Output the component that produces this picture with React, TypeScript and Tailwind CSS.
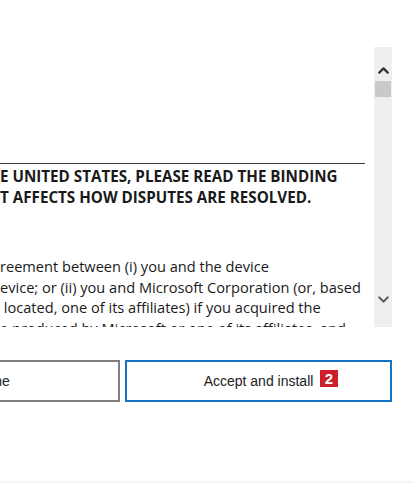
import { ChevronUp, ChevronDown } from "lucide-react";

const boldLines = [
  "E UNITED STATES, PLEASE READ THE BINDING",
  "T AFFECTS HOW DISPUTES ARE RESOLVED.",
];

const bodyLines = [
  "reement between (i) you and the device",
  "evice; or (ii) you and Microsoft Corporation (or, based",
  " located, one of its affiliates) if you acquired the",
  "e produced by Microsoft or one of its affiliates, and",
];

export default function App() {
  return (
    <div className="w-[412px] h-[487px] bg-white overflow-hidden flex flex-col">
      <div className="h-[47px]" />

      <div className="flex h-[280px] pr-[20px]">
        <div className="flex-1 overflow-hidden text-[#1a1a1a] font-['Open_Sans',sans-serif]">
          <div className="h-[116px]" />
          <div className="w-[365px] h-px bg-[#3a3a3a]" />
          <div className="mt-[2px] text-[15.2px] leading-[21px] font-bold">
            {boldLines.map((l) => (
              <div key={l} className="whitespace-pre">{l}</div>
            ))}
          </div>
          <div className="mt-[48px] text-[14.6px] leading-[20.5px]">
            {bodyLines.map((l) => (
              <div key={l} className="whitespace-pre">{l}</div>
            ))}
          </div>
        </div>

        <div className="w-[18px] bg-[#efefef] flex flex-col items-center">
          <ChevronUp className="mt-[15px] w-[17px] h-[17px] text-[#333]" strokeWidth={3.2} />
          <div className="mt-[2px] w-[16px] h-[16px] bg-[#c9c9c9]" />
          <div className="flex-1" />
          <ChevronDown className="mb-[19px] w-[17px] h-[17px] text-[#555]" strokeWidth={2.8} />
        </div>
      </div>

      <div className="mt-[33px] flex gap-[5px] h-[42px] font-['Liberation_Sans',Arial,sans-serif] text-[14px] text-[#222]">
        <button className="-ml-[147px] w-[267px] border-2 border-[#7f7f7f] bg-white flex items-center justify-center">
          Decline
        </button>
        <button className="relative w-[267px] border-2 border-[#1474c4] bg-white flex items-center justify-center">
          Accept and install
          <span className="absolute left-[193px] top-[8px] w-[18px] h-[17px] bg-[#cc1f2b] text-white font-bold text-[15px] leading-[17px] text-center">
            2
          </span>
        </button>
      </div>

      <div className="flex-1" />
      <div className="mb-[4px] h-[2px] bg-[#f6f5ef]" />
    </div>
  );
}
